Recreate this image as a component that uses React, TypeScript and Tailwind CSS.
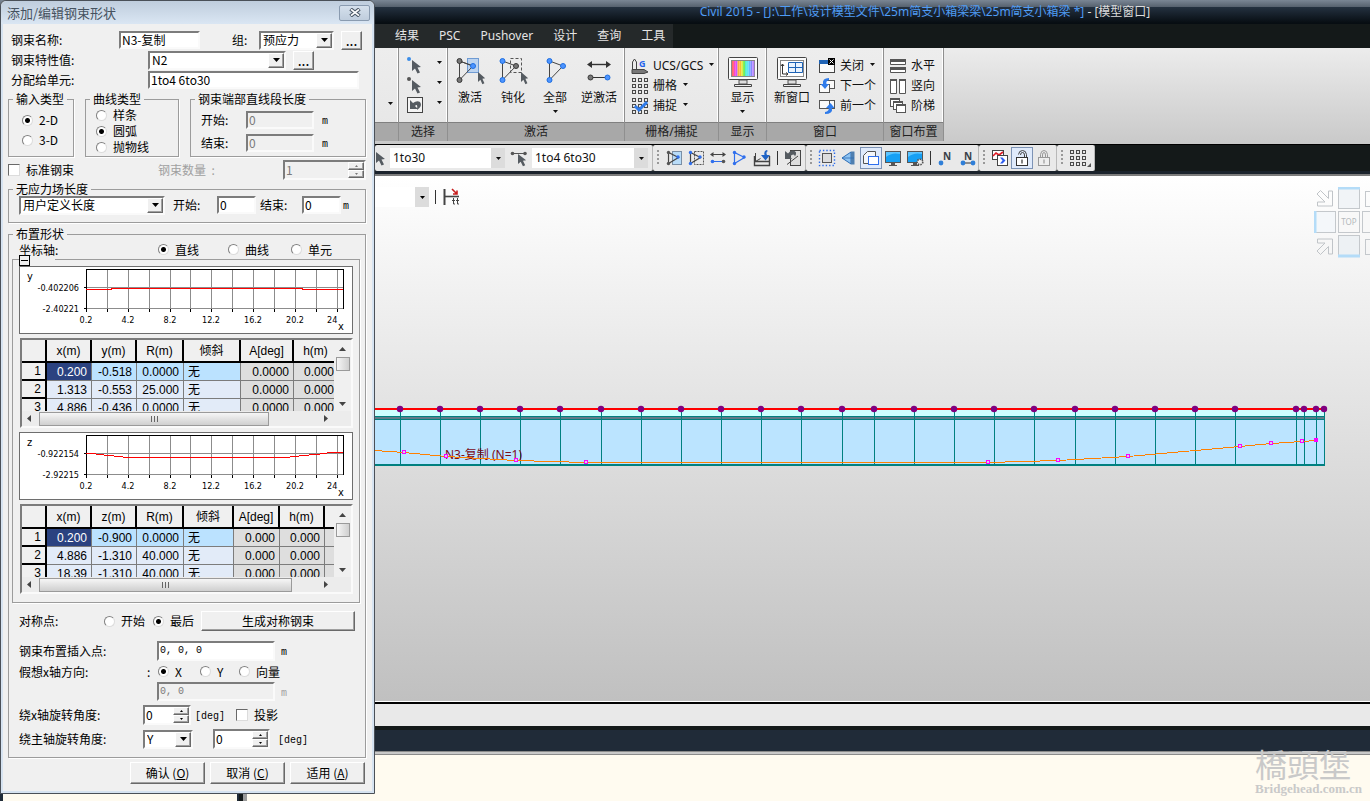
import type { ReactNode } from 'react';

const SUNKEN = 'border-2 border-t-[#7c7c7c] border-l-[#7c7c7c] border-r-[#fafafa] border-b-[#fafafa]';
const RAISED =
  'border border-t-white border-l-white border-r-[#696969] border-b-[#696969] bg-[#f0f0f0] shadow-[inset_-1px_-1px_0_#a0a0a0]';
const GROUP = 'min-w-0 border border-[#9c9c9c] shadow-[1px_1px_0_#fff]';

/* ---------- dialog controls ---------- */

const Caret = ({ className = '' }: { className?: string }) => (
  <svg className={className} width="7" height="4" viewBox="0 0 7 4" aria-hidden="true">
    <path d="M0 0h7L3.5 4z" fill="currentColor" />
  </svg>
);

interface TextBoxProps {
  label: string;
  value: string;
  className: string;
  id?: string;
  disabled?: boolean;
}

const TextBox = ({ label, value, className, id, disabled }: TextBoxProps) => (
  <input
    id={id}
    aria-label={label}
    defaultValue={value}
    disabled={disabled}
    className={`${SUNKEN} ${className} shrink-0 px-px pb-px leading-3 ${disabled ? 'bg-[#f0f0f0] text-[#7a7a7a]' : 'bg-white'}`}
  />
);

const DropDown = ({ label, value, className, id }: TextBoxProps) => (
  <span className={`relative h-[19px] shrink-0 ${className}`}>
    <select
      id={id}
      aria-label={label}
      className={`${SUNKEN} block h-full w-full appearance-none bg-white pl-0.5 leading-3`}
    >
      <option>{value}</option>
    </select>
    <span
      className={`${RAISED} pointer-events-none absolute top-0.5 right-0.5 bottom-0.5 flex w-4 items-center justify-center`}
    >
      <Caret />
    </span>
  </span>
);

const Spinner = ({ label, value, className, id, disabled }: TextBoxProps) => (
  <span className={`${SUNKEN} ${className} flex h-5 shrink-0 ${disabled ? 'bg-[#f0f0f0] text-[#7a7a7a]' : 'bg-white'}`}>
    <input
      id={id}
      aria-label={label}
      defaultValue={value}
      disabled={disabled}
      className="w-0 min-w-0 flex-1 px-px pb-0.5 leading-3"
    />
    <span className="flex w-4 flex-col">
      <button className={`${RAISED} flex flex-1 items-center justify-center`} aria-label="增加">
        <svg width="3" height="2" viewBox="0 0 3 2">
          <path d="M0 2h3L1.5 0z" fill="currentColor" />
        </svg>
      </button>
      <button className={`${RAISED} flex flex-1 items-center justify-center`} aria-label="减少">
        <svg width="3" height="2" viewBox="0 0 3 2">
          <path d="M0 0h3L1.5 2z" fill="currentColor" />
        </svg>
      </button>
    </span>
  </span>
);

const Radio = ({
  name,
  children,
  checked,
  className = '',
}: {
  name: string;
  children: ReactNode;
  checked?: boolean;
  className?: string;
}) => (
  <label className={`flex shrink-0 items-center gap-1.5 ${className}`}>
    <input
      type="radio"
      name={name}
      defaultChecked={checked}
      className="size-[11px] shrink-0 appearance-none rounded-full border border-t-[#808080] border-r-[#dcdcdc] border-b-[#dcdcdc] border-l-[#808080] bg-white checked:bg-[radial-gradient(circle,#000_2px,#fff_3px)]"
    />
    {children}
  </label>
);

const CheckBox = ({ children }: { children: ReactNode }) => (
  <label className="flex shrink-0 items-center gap-1.5">
    <input
      type="checkbox"
      className="size-3 shrink-0 appearance-none border border-t-[#696969] border-r-[#dcdcdc] border-b-[#dcdcdc] border-l-[#696969] bg-white checked:bg-black"
    />
    {children}
  </label>
);

const Legend = ({ children }: { children: ReactNode }) => (
  <legend className="ml-1 px-[3px] leading-3">{children}</legend>
);

const Unit = ({ className, children }: { className: string; children: ReactNode }) => (
  <span className={`pt-1 font-['Liberation_Mono',monospace] text-[10px] ${className}`}>{children}</span>
);

/* ---------- profile charts ---------- */

const GRID_X = [88, 109, 130, 151, 171, 192, 213, 234, 255, 276, 297, 318];
const TICK_LABELS = [
  [67, '0.2'],
  [109, '4.2'],
  [151, '8.2'],
  [192, '12.2'],
  [234, '16.2'],
  [276, '20.2'],
] as const;

const ProfileChart = ({ axis, upper, lower, line }: { axis: string; upper: string; lower: string; line: string }) => (
  <div className="h-[68px] border border-[#6e6e6e] bg-white">
    <svg
      width="332"
      height="66"
      viewBox="1 1 332 66"
      className="block font-['DejaVu_Sans_Condensed','Noto_Sans',sans-serif] text-[9px]"
    >
      <g stroke="#8c8c8c" shapeRendering="crispEdges">
        {GRID_X.map((x) => (
          <path key={x} d={`M${x + 0.5} 3v40`} />
        ))}
        <path d="M67 21.5h257M67 42.5h257" />
      </g>
      <path d="M67.500 43V3.500H324.500V43" fill="none" stroke="#000" shapeRendering="crispEdges" />
      <path
        d={`M65 21.500h3M65 42.500h3${[67, ...GRID_X].map((x) => `M${x + 0.5} 43v3`).join('')}`}
        stroke="#000"
        shapeRendering="crispEdges"
      />
      <path d={line} fill="none" stroke="#f00" shapeRendering="crispEdges" />
      <text x="8" y="14" fontSize="11">{axis}</text>
      <text x="60" y="25" textAnchor="end">{upper}</text>
      <text x="60" y="46" textAnchor="end">{lower}</text>
      {TICK_LABELS.map(([x, t]) => (
        <text key={t} x={x} y="57" textAnchor="middle">{t}</text>
      ))}
      <text x="308" y="57">24</text>
      <text x="319" y="64" fontSize="11">x</text>
    </svg>
  </div>
);

/* ---------- coordinate tables ---------- */

const ScrollArrow = ({ d }: { d: string }) => (
  <svg width="7" height="7" viewBox="0 0 7 7" aria-hidden="true">
    <path d={d} fill="#444" />
  </svg>
);

interface CoordTableProps {
  head: string[];
  widths: number[];
  rows: string[][];
  thumb: string;
}

const CoordTable = ({ head, widths, rows, thumb }: CoordTableProps) => (
  <div className={`${SUNKEN} ml-px h-[90px] min-w-0 bg-[#f0f0f0] font-['Liberation_Sans','Noto_Sans_CJK_SC',sans-serif]`}>
    <div className="flex h-[71px]">
      <div className="min-w-0 flex-1 overflow-hidden">
        <table className="w-max table-fixed border-separate border-spacing-0 text-right">
          <colgroup>
            {widths.map((w, i) => (
              <col key={i} style={{ width: w }} />
            ))}
          </colgroup>
          <thead>
            <tr>
              {head.map((h, i) => (
                <th key={i} className="h-[23px] border-r-2 border-b-2 border-black p-0 text-center font-normal">
                  {h}
                </th>
              ))}
            </tr>
          </thead>
          <tbody>
            {rows.map((row, r) => (
              <tr key={row[0]}>
                {row.map((cell, c) => {
                  let tone = 'border-r border-b border-[#7c7c7c] ';
                  if (c === 0) tone = 'border-r-2 border-b-2 border-black bg-[#f0f0f0]';
                  else if (c > 4) tone += 'bg-[#dedede]';
                  else if (r > 0) tone += 'bg-[#e2ebf8]';
                  else if (c === 1) tone += 'bg-[#2b4280] text-white';
                  else tone += 'bg-[#bbe2ff]';
                  return (
                    <td key={c} className={`h-[18px] overflow-hidden p-0 px-1 leading-4 ${c === 4 ? 'text-left' : ''} ${tone}`}>
                      {cell}
                    </td>
                  );
                })}
              </tr>
            ))}
          </tbody>
        </table>
      </div>
      <div className="flex w-[17px] flex-col items-center bg-[#f0f0f0] pt-1.5 pb-1">
        <ScrollArrow d="M0 5h7L3.500 1z" />
        <div className="mt-1 h-3.5 w-3.5 border border-[#9a9a9a] bg-linear-to-r from-[#f6f6f6] to-[#cfcfcf]" />
        <div className="flex-1" />
        <ScrollArrow d="M0 2h7L3.500 6z" />
      </div>
    </div>
    <div className="flex h-[15px] items-center bg-[#ececec] pr-[22px] pl-1">
      <ScrollArrow d="M5 0v7L1 3.500z" />
      <div
        className={`ml-1.5 flex h-3.5 items-center justify-center gap-px border border-[#9a9a9a] bg-linear-to-b from-[#f6f6f6] to-[#cfcfcf] ${thumb}`}
      >
        <i className="h-1.5 w-px bg-[#666]" />
        <i className="mx-px h-1.5 w-px bg-[#666]" />
        <i className="h-1.5 w-px bg-[#666]" />
      </div>
      <div className="flex-1" />
      <ScrollArrow d="M2 0v7L6 3.500z" />
    </div>
  </div>
);

const TABLE_Y: CoordTableProps = {
  head: ['', 'x(m)', 'y(m)', 'R(m)', '倾斜', 'A[deg]', 'h(m)'],
  widths: [25, 45, 45, 47, 57, 53, 45],
  rows: [
    ['1', '0.200', '-0.518', '0.0000', '无', '0.0000', '0.000'],
    ['2', '1.313', '-0.553', '25.000', '无', '0.0000', '0.000'],
    ['3', '4.886', '-0.436', '0.0000', '无', '0.0000', '0.000'],
  ],
  thumb: 'w-[230px]',
};

const TABLE_Z: CoordTableProps = {
  head: ['', 'x(m)', 'z(m)', 'R(m)', '倾斜', 'A[deg]', 'h(m)', ''],
  widths: [25, 45, 45, 47, 50, 46, 45, 45],
  rows: [
    ['1', '0.200', '-0.900', '0.0000', '无', '0.000', '0.000', ''],
    ['2', '4.886', '-1.310', '40.000', '无', '0.000', '0.000', ''],
    ['3', '18.39', '-1.310', '40.000', '无', '0.000', '0.000', ''],
  ],
  thumb: 'w-[253px]',
};

const TendonDialog = () => (
  <section
    role="dialog"
    aria-label="添加/编辑钢束形状"
    className="absolute top-0 left-0 z-10 w-[375px] rounded-t-md border border-[#4a5058] bg-[#f0f0f0] font-['Noto_Sans_CJK_SC',sans-serif] text-[12px] leading-4 text-black shadow-[inset_0_0_0_2px_#d6e3f1]"
  >
    <header className="flex h-[23px] items-center justify-between rounded-t-md bg-linear-to-b from-[#bfcddd] to-[#dae6f3] pr-1 pl-1.5">
      <h1 className="text-[13px] text-[#46525f]">添加/编辑钢束形状</h1>
      <button
        aria-label="关闭"
        className="flex h-4 w-[31px] items-center justify-center rounded-xs border border-[#8a9bb0] bg-linear-to-b from-[#d5e0ec] to-[#bfcddd]"
      >
        <svg width="12" height="9" viewBox="0 0 12 9">
          <path d="M1.500 1l9 7M10.500 1l-9 7" stroke="#4c5866" strokeWidth="3.800" />
          <path d="M2 1.400l8 6.200M10 1.400l-8 6.200" stroke="#fff" strokeWidth="1.800" />
        </svg>
      </button>
    </header>

    <div className="pt-1.5 pr-2 pb-[9px] pl-[7px]">
      <div className="flex h-5 items-center">
        <label htmlFor="name" className="w-[111px] pl-[3px]">钢束名称:</label>
        <TextBox id="name" label="钢束名称" value="N3-复制" className="h-[18px] w-[81px]" />
        <label htmlFor="group" className="w-[59px] pl-8">组:</label>
        <DropDown id="group" label="组" value="预应力" className="w-[75px]" />
        <button className={`${RAISED} ml-[7px] h-[19px] w-[21px] text-[14px] leading-3`}>...</button>
      </div>
      <div className="flex h-5 items-center">
        <label htmlFor="prop" className="w-[140px] pl-[3px]">钢束特性值:</label>
        <DropDown id="prop" label="钢束特性值" value="N2" className="w-[138px]" />
        <button className={`${RAISED} ml-[7px] h-[19px] w-[21px] text-[14px] leading-3`}>...</button>
      </div>
      <div className="flex h-5 items-center">
        <label htmlFor="elems" className="w-[140px] pl-[3px]">分配给单元:</label>
        <TextBox id="elems" label="分配给单元" value="1to4 6to30" className="h-[18px] w-[211px]" />
      </div>

      <div className="mt-[3px] flex h-[64px] justify-between">
        <fieldset className={`${GROUP} w-[66px]`}>
          <Legend>输入类型</Legend>
          <div className="pt-[5px] pl-[13px]">
            <Radio name="dim" checked className="h-5">2-D</Radio>
            <Radio name="dim" className="h-5">3-D</Radio>
          </div>
        </fieldset>
        <fieldset className={`${GROUP} w-[94px]`}>
          <Legend>曲线类型</Legend>
          <div className="pt-0.5 pl-2.5">
            <Radio name="curve" className="h-4">样条</Radio>
            <Radio name="curve" checked className="h-4">圆弧</Radio>
            <Radio name="curve" className="h-4">抛物线</Radio>
          </div>
        </fieldset>
        <fieldset className={`${GROUP} w-[176px]`}>
          <Legend>钢束端部直线段长度</Legend>
          <div className="pt-[3px] pl-2.5">
            <div className="flex h-[23px] items-center">
              <label htmlFor="s0" className="w-[45px]">开始:</label>
              <TextBox id="s0" label="开始" value="0" disabled className="h-[18px] w-[68px]" />
              <Unit className="pl-2">m</Unit>
            </div>
            <div className="flex h-[23px] items-center">
              <label htmlFor="s1" className="w-[45px]">结束:</label>
              <TextBox id="s1" label="结束" value="0" disabled className="h-[18px] w-[68px]" />
              <Unit className="pl-2">m</Unit>
            </div>
          </div>
        </fieldset>
      </div>

      <div className="mt-1 flex h-[18px] items-center">
        <div className="w-[150px]">
          <CheckBox>标准钢束</CheckBox>
        </div>
        <label htmlFor="count" className="w-[125px] text-[#a0a0a0]">钢束数量 &nbsp;:</label>
        <Spinner id="count" label="钢束数量" value="1" disabled className="w-[83px]" />
      </div>

      <fieldset className={`${GROUP} mt-1 h-10`}>
        <Legend>无应力场长度</Legend>
        <div className="flex h-5 items-center pl-2.5">
          <DropDown label="无应力场长度" value="用户定义长度" className="w-[146px]" />
          <label htmlFor="u0" className="w-[52px] pl-2">开始:</label>
          <TextBox id="u0" label="开始" value="0" className="h-[18px] w-[39px]" />
          <label htmlFor="u1" className="w-[46px] pl-1">结束:</label>
          <TextBox id="u1" label="结束" value="0" className="h-[18px] w-[39px]" />
          <Unit className="pl-0.5">m</Unit>
        </div>
      </fieldset>

      <fieldset className={`${GROUP} mt-[5px] pb-2`}>
        <Legend>布置形状</Legend>
        <div className="flex h-[19px] items-center pl-2.5">
          <span className="w-[139px]">坐标轴:</span>
          <Radio name="axis" checked className="w-[70px]">直线</Radio>
          <Radio name="axis" className="w-[63px]">曲线</Radio>
          <Radio name="axis">单元</Radio>
        </div>
        <div className={`${GROUP} relative mr-[5px] ml-[3px] flex flex-col gap-1 px-1.5 pt-1.5 pb-2`}>
          <span className="absolute -top-1.5 left-1.5 flex h-3 w-9 items-end bg-linear-to-b from-transparent from-40% to-[#f0f0f0] to-40%">
            <button
              aria-label="折叠"
              className="flex size-[11px] items-center justify-center border border-black bg-[#f0f0f0]"
            >
              <i className="h-px w-[7px] bg-black" />
            </button>
          </span>
          <ProfileChart
            axis="y"
            upper="-0.402206"
            lower="-2.40221"
            line="M67 23.500H92V22.500H283V23.500H324"
          />
          <CoordTable {...TABLE_Y} />
          <ProfileChart
            axis="z"
            upper="-0.922154"
            lower="-2.92215"
            line="M67 21.500h6l12 1.500 24 2.500H266l19-2 16-1.500 10-1.500h13"
          />
          <CoordTable {...TABLE_Z} />
        </div>

        <div className="mt-2 flex h-5 items-center pl-2.5">
          <span className="w-[85px]">对称点:</span>
          <Radio name="sym" className="w-[49px]">开始</Radio>
          <Radio name="sym" checked className="w-[48px]">最后</Radio>
          <button className={`${RAISED} h-5 w-[154px]`}>生成对称钢束</button>
        </div>
        <div className="mt-2.5 flex h-5 items-center pl-2.5">
          <label htmlFor="ins" className="w-[138px]">钢束布置插入点:</label>
          <TextBox
            id="ins"
            label="钢束布置插入点"
            value="0, 0, 0"
            className="h-5 w-[118px] font-['Liberation_Mono',monospace] text-[10px]"
          />
          <Unit className="pl-1.5">m</Unit>
        </div>
        <div className="flex h-[21px] items-center pl-2.5">
          <span className="w-[128px]">假想x轴方向:</span>
          <span className="w-[11px]">:</span>
          <Radio name="dir" checked className="w-[42px]">X</Radio>
          <Radio name="dir" className="w-[39px]">Y</Radio>
          <Radio name="dir">向量</Radio>
        </div>
        <div className="flex h-[19px] items-center pl-[148px]">
          <TextBox
            label="向量"
            value="0, 0"
            disabled
            className="h-[19px] w-[118px] font-['Liberation_Mono',monospace] text-[10px]"
          />
          <Unit className="pl-1.5 text-[#a0a0a0]">m</Unit>
        </div>
        <div className="mt-1 flex h-5 items-center pl-2.5">
          <label htmlFor="rx" className="w-[124px]">绕x轴旋转角度:</label>
          <Spinner id="rx" label="绕x轴旋转角度" value="0" className="w-[48px]" />
          <Unit className="w-[45px] pl-1">[deg]</Unit>
          <CheckBox>投影</CheckBox>
        </div>
        <div className="mt-1 flex h-5 items-center pl-2.5">
          <label htmlFor="rm" className="w-[124px]">绕主轴旋转角度:</label>
          <DropDown id="rm" label="主轴" value="Y" className="w-[50px]" />
          <span className="w-5" />
          <Spinner label="绕主轴旋转角度" value="0" className="w-[57px]" />
          <Unit className="pl-2">[deg]</Unit>
        </div>
      </fieldset>

      <div className="mt-1 flex justify-end gap-[5px] pr-px">
        <button className={`${RAISED} h-[22px] w-[75px]`}>确认 (<u>O</u>)</button>
        <button className={`${RAISED} h-[22px] w-[75px]`}>取消 (<u>C</u>)</button>
        <button className={`${RAISED} h-[22px] w-[75px]`}>适用 (<u>A</u>)</button>
      </div>
    </div>
  </section>
);

/* ---------- ribbon icons ---------- */

const POINTER = 'M0 0L9 7 5.500 7.500 8 12.500 5.500 13.500 3 8.500 0 11z';
const GREY = '#555b61';
const BLUE = '#4d94ff';

const Svg = ({ w, h, children }: { w: number; h: number; children: ReactNode }) => (
  <svg width={w} height={h} viewBox={`0 0 ${w} ${h}`} fill="none" className="shrink-0 overflow-visible" aria-hidden="true">
    {children}
  </svg>
);

const Dot = ({ x, y, r = 2.5, c = BLUE }: { x: number; y: number; r?: number; c?: string }) => (
  <circle cx={x} cy={y} r={r} fill={c} stroke={c === BLUE ? '#1f6fe0' : '#3a3a3a'} strokeWidth="1" />
);

const PickIcon = ({ c }: { c: string }) => (
  <Svg w={18} h={18}>
    <circle cx="2" cy="2" r="2" fill={c} />
    <path d={POINTER} transform="translate(5 3)" fill={GREY} />
  </Svg>
);

const UndoIcon = () => (
  <Svg w={18} h={18}>
    <rect x=".5" y=".5" width="15" height="15" fill="#f4f4f4" stroke="#444" />
    <path d="M3 3v9h8L8 9q3-3 2 4 6-4 3-8-3-2-7 1z" fill={GREY} />
  </Svg>
);

const ActivateIcon = () => (
  <Svg w={30} h={30}>
    <rect x="12.500" y="2.500" width="11" height="14" fill="#bcd3ef" stroke="#6f9bd3" />
    <path d="M4.500 5v19L18 10zM4.500 5L18 10" stroke="#444" />
    <Dot x={4.500} y={5} c="#777" />
    <Dot x={4.500} y={24} c="#777" />
    <Dot x={18} y={10} />
    <path d={POINTER} transform="translate(23 16) scale(.8 .9)" fill={GREY} />
  </Svg>
);

const DeactivateIcon = () => (
  <Svg w={30} h={30}>
    <rect x="12.500" y="2.500" width="11" height="14" stroke="#555" strokeDasharray="3 2" />
    <path d="M4.500 5v19L18 10z" stroke="#444" />
    <Dot x={4.500} y={5} />
    <Dot x={4.500} y={24} />
    <Dot x={18} y={10} c="#777" />
    <path d={POINTER} transform="translate(23 16) scale(.8 .9)" fill={GREY} />
  </Svg>
);

const AllIcon = () => (
  <Svg w={18} h={30}>
    <path d="M3.500 5v19L17 10z" stroke="#444" />
    <Dot x={3.500} y={5} />
    <Dot x={3.500} y={24} />
    <Dot x={17} y={10} />
  </Svg>
);

const InverseIcon = () => (
  <Svg w={24} h={30}>
    <path d="M2 8.500h20" stroke="#333" strokeWidth="1.400" />
    <path d="M0 8.500l5-3.500v7zM24 8.500l-5-3.500v7z" fill="#333" />
    <path d="M4 21.500h16" stroke="#333" />
    <Dot x={3.500} y={21.500} c="#777" />
    <Dot x={20.500} y={21.500} />
  </Svg>
);

const UcsIcon = () => (
  <Svg w={18} h={17}>
    <path d="M1.500 15V4l2-3 2 3v8" stroke="#444" />
    <path d="M1 11.500h12l4 2.500-4 1.500H1z" fill="#777" stroke="#444" />
    <text x="8" y="9" fontSize="9" fontWeight="bold" fill="#2563eb">G</text>
  </Svg>
);

const CELLS = [0, 1, 2].flatMap((r) => [0, 1, 2].map((c) => [c * 6 + 1, r * 6 + 1] as const));

const GridIcon = ({ snap }: { snap?: boolean }) => (
  <Svg w={18} h={18}>
    {CELLS.map(([x, y]) => (
      <rect key={`${x}-${y}`} x={x + 0.5} y={y + 0.5} width="3" height="3" stroke="#4a4a4a" />
    ))}
    {snap && <path d="M4 9l4 4 8-8" stroke="#2f7bea" strokeWidth="3" />}
  </Svg>
);

const RAINBOW = ['#f66', '#f4c', '#c5f', '#f9b13a', '#fb3', '#de4', '#7e5', '#5ec', '#5ce8f4', '#6bf', '#88f', '#b8f'];

const MonitorIcon = ({ children }: { children: ReactNode }) => (
  <Svg w={30} h={32}>
    <rect x=".5" y="1.500" width="29" height="22" rx="1" fill="#fafafa" stroke="#444" />
    <rect x="3.500" y="4.500" width="23" height="16" fill="#fff" stroke="#888" />
    {children}
    <path d="M11 24h8v4h-8z" fill="#ddd" stroke="#555" />
    <path d="M6.500 28.500h17v2h-17z" fill="#eee" stroke="#444" />
  </Svg>
);

const WindowIcon = ({ kind }: { kind: 'close' | 'next' | 'prev' }) => (
  <Svg w={17} h={17}>
    {kind === 'close' ? (
      <>
        <rect x=".5" y="2.500" width="15" height="12" fill="#fafafa" stroke="#444" />
        <path d="M0 2h10v4H0z" fill="#1f63b5" />
        <path d="M9 0h7v7H9z" fill="#000" />
        <path d="M10.500 1.500l4 4M14.500 1.500l-4 4" stroke="#fff" />
      </>
    ) : (
      <>
        <rect x="5.500" y="2.500" width="10" height="8" fill="#fafafa" stroke="#555" />
        <rect x=".5" y={kind === 'next' ? 6.5 : 2.5} width="10" height="8" fill="#fafafa" stroke="#555" />
        {kind === 'next' ? (
          <path d="M10 0Q3 0 4 6H1.500l4.500 5 4-5H7.500q-1-3 2.500-4z" fill="#2f7bea" />
        ) : (
          <path d="M6 16q8 0 7-6h2.500L11.500 5 7 10h2.500q1 3-3.500 4z" fill="#2f7bea" />
        )}
      </>
    )}
  </Svg>
);

const ArrangeIcon = ({ kind }: { kind: 'rows' | 'cols' | 'cascade' }) => (
  <Svg w={17} h={17}>
    {kind === 'rows' && (
      <>
        <path d="M.5 1.500h15v5H.5zM.5 9.500h15v5H.5z" fill="#fff" stroke="#555" />
        <path d="M0 1h16v3H0zM0 9h16v3H0z" fill="#555" />
      </>
    )}
    {kind === 'cols' && (
      <>
        <path d="M.5 1.500h6v14h-6zM9.500 1.500h6v14h-6z" fill="#fff" stroke="#555" />
        <path d="M0 1h7v2H0zM9 1h7v2H9z" fill="#555" />
      </>
    )}
    {kind === 'cascade' &&
      [0, 3, 6].map((o) => (
        <g key={o}>
          <rect x={o + 0.5} y={o + 0.5} width="9" height="8" fill="#fff" stroke="#555" />
          <path d={`M${o} ${o + 1}h10`} stroke="#555" strokeWidth="2" />
        </g>
      ))}
  </Svg>
);

/* ---------- ribbon ---------- */

const RibbonGroup = ({ title, className, children }: { title: string; className: string; children?: ReactNode }) => (
  <div
    className={`flex h-[93px] shrink-0 flex-col border-r border-[#8f8f8f] bg-linear-to-b from-[#ededed] to-[#e6e6e6] shadow-[inset_-1px_0_0_#fff] ${className}`}
  >
    <div className="flex flex-1 pt-2">{children}</div>
    <div className="h-[19px] overflow-hidden border-t border-[#808080] bg-[#a8a8a8] text-center leading-[18px] whitespace-nowrap text-[#222]">
      {title}
    </div>
  </div>
);

const BigButton = ({ icon, label, menu, className }: { icon: ReactNode; label: string; menu?: boolean; className: string }) => (
  <button className={`flex shrink-0 flex-col items-center self-start whitespace-nowrap ${className}`}>
    <span className="flex h-[34px] items-start">{icon}</span>
    <span className="leading-4">{label}</span>
    {menu && <Caret className="mt-1 h-[3px] w-[5px]" />}
  </button>
);

const RowButton = ({ icon, label, menu }: { icon: ReactNode; label: string; menu?: boolean }) => (
  <button className="flex h-5 items-center gap-1 whitespace-nowrap">
    {icon}
    {label}
    {menu && <Caret className="mb-1 ml-0.5 h-[3px] w-[5px]" />}
  </button>
);

const Ribbon = () => (
  <div className="flex h-24 shrink-0 bg-linear-to-b from-[#ececec] to-[#c9c9c9] pl-[375px] text-[#111]">
    <RibbonGroup title="" className="w-6">
      <Caret className="mt-[46px] ml-[13px] h-[3px] w-[5px]" />
    </RibbonGroup>
    <RibbonGroup title="选择" className="w-[49px]">
      <div className="flex w-full flex-col pl-2">
        {[<PickIcon key="n" c="#3b8de8" />, <PickIcon key="e" c="#555" />, <UndoIcon key="u" />].map((icon, i) => (
          <button key={i} aria-label="选择" className="flex h-5 items-center gap-3">
            {icon}
            <Caret className="mb-2 h-[3px] w-[5px]" />
          </button>
        ))}
      </div>
    </RibbonGroup>
    <RibbonGroup title="激活" className="w-[177px]">
      <BigButton icon={<ActivateIcon />} label="激活" className="w-[44px]" />
      <BigButton icon={<DeactivateIcon />} label="钝化" className="w-[42px]" />
      <BigButton icon={<AllIcon />} label="全部" menu className="w-[42px]" />
      <BigButton icon={<InverseIcon />} label="逆激活" className="w-[46px]" />
    </RibbonGroup>
    <RibbonGroup title="栅格/捕捉" className="w-[94px]">
      <div className="flex flex-col pl-1.5">
        <RowButton icon={<UcsIcon />} label="UCS/GCS" menu />
        <RowButton icon={<GridIcon />} label="栅格" menu />
        <RowButton icon={<GridIcon snap />} label="捕捉" menu />
      </div>
    </RibbonGroup>
    <RibbonGroup title="显示" className="w-[48px]">
      <BigButton
        label="显示"
        menu
        className="w-full"
        icon={
          <MonitorIcon>
            {RAINBOW.map((c, i) => (
              <path key={c} d={`M${4 + i * 1.85} 5h1.900v15h-1.900z`} fill={c} />
            ))}
          </MonitorIcon>
        }
      />
    </RibbonGroup>
    <RibbonGroup title="窗口" className="w-[117px]">
      <BigButton
        label="新窗口"
        className="w-[50px]"
        icon={
          <MonitorIcon>
            <path d="M11.500 6.500h14v10h-14zM18.500 6.500v10M11.500 11.500h14" fill="#eaf3fd" stroke="#1f63b5" />
            <path d="M5.500 8v10H11M4 10l1.500-2L7 10M9 16.500l2 1.500-2 1.500" stroke="#333" />
          </MonitorIcon>
        }
      />
      <div className="flex flex-col pl-0.5">
        <RowButton icon={<WindowIcon kind="close" />} label="关闭" menu />
        <RowButton icon={<WindowIcon kind="next" />} label="下一个" />
        <RowButton icon={<WindowIcon kind="prev" />} label="前一个" />
      </div>
    </RibbonGroup>
    <RibbonGroup title="窗口布置" className="w-[60px]">
      <div className="flex flex-col pl-1.5">
        <RowButton icon={<ArrangeIcon kind="rows" />} label="水平" />
        <RowButton icon={<ArrangeIcon kind="cols" />} label="竖向" />
        <RowButton icon={<ArrangeIcon kind="cascade" />} label="阶梯" />
      </div>
    </RibbonGroup>
  </div>
);

/* ---------- tool strip ---------- */

const Tool = ({ label, active, children }: { label: string; active?: boolean; children: ReactNode }) => (
  <button
    aria-label={label}
    className={`flex h-[22px] w-[22px] shrink-0 items-center justify-center ${active ? 'border border-[#7d93b5] bg-[#dfeafb]' : ''}`}
  >
    <Svg w={18} h={18}>{children}</Svg>
  </button>
);

const Strip = ({ className, children }: { className: string; children: ReactNode }) => (
  <div className={`flex shrink-0 items-center rounded-xs border-r border-[#b8b8b8] bg-[#e9e9e9] ${className}`}>{children}</div>
);

const Grip = () => <i className="mr-1 ml-1 h-4 w-0.5 shrink-0 bg-[repeating-linear-gradient(#999_0_2px,transparent_2px_4px)]" />;
const Bar = () => <i className="mx-1 h-3.5 w-px shrink-0 bg-[#333]" />;

const Combo = ({ label, value, className }: { label: string; value: string; className: string }) => (
  <span className={`relative block h-5 shrink-0 ${className}`}>
    <select aria-label={label} className="block h-full w-full appearance-none bg-white pl-[3px] text-[#111]">
      <option>{value}</option>
    </select>
    <span className="pointer-events-none absolute top-0 right-0 flex h-full w-3.5 items-center justify-center bg-[#dcdcdc]">
      <Caret className="h-[3px] w-[5px]" />
    </span>
  </span>
);

const MiniTriangle = ({ dots, line }: { dots: string; line: string }) => (
  <>
    <path d="M3.500 3.500v11l10-6z" stroke={line} strokeWidth="1.200" />
    <circle cx="3.500" cy="3.500" r="1.700" fill={dots} />
    <circle cx="3.500" cy="14.500" r="1.700" fill={dots} />
    <circle cx="13" cy="8" r="1.700" fill="#2f6fed" />
  </>
);

const MiniMonitor = () => (
  <>
    <rect x="1.500" y="2.500" width="15" height="11" fill="#16a0f4" stroke="#555" />
    <path d="M2 8q6-5 14-3V3H2z" fill="#5cc4ff" />
    <path d="M7 14h4v2H7zM5 16h8v1H5z" fill="#555" />
  </>
);

const ToolStrip = () => (
  <div className="flex h-[27px] shrink-0 border-t border-black bg-[#141919] pl-[375px] text-[#111]">
    <Strip className="w-[278px]">
      <Svg w={15} h={18}>
        <path d={POINTER} transform="translate(1 3)" fill={GREY} />
      </Svg>
      <Combo label="节点" value="1to30" className="w-[115px]" />
      <span className="flex w-[27px] justify-center">
        <Svg w={18} h={18}>
          <path d="M2 4.500h14" stroke="#555" />
          <circle cx="2.500" cy="4.500" r="1.800" fill="#555" />
          <circle cx="15" cy="4.500" r="1.800" fill="#555" />
          <path d={POINTER} transform="translate(8 5) scale(.9)" fill={GREY} />
        </Svg>
      </span>
      <Combo label="单元" value="1to4 6to30" className="w-[116px]" />
    </Strip>
    <Strip className="w-[153px]">
      <Grip />
      <Tool label="激活">
        <rect x="7.500" y="2.500" width="9" height="13" fill="#b9dcf8" stroke="#7a8fa5" />
        <MiniTriangle dots="#555" line="#444" />
      </Tool>
      <Tool label="钝化">
        <rect x="7.500" y="2.500" width="9" height="13" stroke="#555" strokeDasharray="2 1" />
        <MiniTriangle dots="#2f6fed" line="#444" />
      </Tool>
      <Tool label="逆激活">
        <path d="M2 5.500h14" stroke="#444" />
        <path d="M1 5.500L4.500 3v5zM17 5.500L13.500 3v5z" fill="#444" />
        <path d="M3 12.500h12" stroke="#2f6fed" />
        <circle cx="3.500" cy="12.500" r="1.800" fill="#2f6fed" />
        <circle cx="14.500" cy="12.500" r="1.800" fill="#555" />
      </Tool>
      <Tool label="全部">
        <MiniTriangle dots="#2f6fed" line="#2f6fed" />
      </Tool>
      <Tool label="保存">
        <path d="M1.500 7v9.500h15V7M1.500 12.500h15" stroke="#444" strokeWidth="1.400" />
        <path d="M2.500 4v8.500l5-3" stroke="#444" />
        <path d="M13.500 1q-3 1-2 5h-3.500l4.500 5.500 4.500-5.500H14q-1.500-3 1-4z" fill="#1f63c5" />
      </Tool>
      <Bar />
      <Tool label="恢复">
        <rect x="6.500" y="1.500" width="10" height="15" fill="#ddd" stroke="#444" />
        <path d="M1 2v8h7L6 7.500q4-4 5 0 3-5-2-6-3 0-5 3z" fill={GREY} />
        <path d="M3 15.500L14 7" stroke="#444" />
      </Tool>
    </Strip>
    <Strip className="w-[173px]">
      <Grip />
      <Tool label="窗口缩放">
        <rect x="4.500" y="4.500" width="9" height="9" fill="#ddd" stroke="#555" />
        <rect x="1.500" y="1.500" width="15" height="15" stroke="#2f6fed" strokeWidth="1.400" strokeDasharray="1.400 2" />
      </Tool>
      <Tool label="透视">
        <path d="M2 9l9-6v12z" fill="#8fc4f2" stroke="#2c6db5" />
        <path d="M11 2.500h3.500v13H11z" fill="#4f7fb0" />
        <path d="M2 9h12" stroke="#2c6db5" strokeWidth=".8" />
      </Tool>
      <Tool label="消隐" active>
        <path d="M1.500 6.500l4-4h8v8l-4 4h-8z" fill="#f4f6fa" stroke="#555" />
        <rect x="6.500" y="7.500" width="10" height="8" fill="#fff" stroke="#2f6fed" />
      </Tool>
      <Tool label="显示">
        <MiniMonitor />
      </Tool>
      <Tool label="显示选项">
        <MiniMonitor />
        <circle cx="14" cy="13" r="2.800" fill="#eee" stroke="#555" strokeWidth="1.600" strokeDasharray="1.500 1" />
      </Tool>
      <Bar />
      <Tool label="节点号">
        <circle cx="4" cy="14" r="2.400" fill="#2f7fd8" />
        <text x="6" y="11" fontSize="10" fontWeight="bold" fill="#3a4048">N</text>
      </Tool>
      <Tool label="单元号">
        <path d="M4 14h11" stroke="#333" />
        <circle cx="4" cy="14" r="2.400" fill="#2f7fd8" />
        <circle cx="14" cy="14" r="2.400" fill="#2f7fd8" />
        <text x="5" y="11" fontSize="10" fontWeight="bold" fill="#3a4048">N</text>
      </Tool>
    </Strip>
    <Strip className="w-[78px]">
      <Grip />
      <Tool label="刷新">
        <rect x="1.500" y="1.500" width="11" height="9" fill="#fff" stroke="#444" />
        <path d="M2 7l3-3 3 2 4-3" stroke="#e01b24" strokeWidth="1.600" />
        <rect x="6.500" y="6.500" width="10" height="10" fill="#fff" stroke="#444" />
        <path d="M9 8.500h2.500l3 3-3 3H9l2.500-3z" fill="#2f5ff0" />
      </Tool>
      <Tool label="解锁" active>
        <path d="M5.500 5.500q.5-4 4-4t4 4v3M7.500 6q0-2.500 2-2.500t2 2.500v2.500" stroke="#444" />
        <rect x="3.500" y="8.500" width="11" height="8" fill="#fff" stroke="#333" />
        <path d="M9 10.500v4" stroke="#333" strokeWidth="1.200" />
      </Tool>
      <Tool label="锁定">
        <path d="M5.500 8.500v-3q.5-4 3.500-4t3.500 4v3M7.500 8V6q0-2.500 1.500-2.500t1.500 2.500v2" stroke="#999" />
        <rect x="3.500" y="8.500" width="11" height="8" fill="#eee" stroke="#999" />
        <path d="M9 10.500v4" stroke="#999" strokeWidth="1.200" />
      </Tool>
    </Strip>
    <Strip className="w-[38px]">
      <Grip />
      <button aria-label="栅格" className="flex items-end pl-0.5">
        <GridIcon />
        <svg width="4" height="4" viewBox="0 0 4 4" aria-hidden="true">
          <path d="M4 0v4H0z" fill="#555" />
        </svg>
      </button>
    </Strip>
  </div>
);

/* ---------- model view ---------- */

const NODES = [
  400, 440, 480, 520, 560, 601, 641, 681, 721, 761, 801, 842, 874, 914, 954, 994, 1034, 1075, 1115, 1155, 1195, 1235,
  1296, 1304, 1316, 1324,
];
const TENDON = [
  [404, 452],
  [446, 456],
  [516, 460],
  [586, 462],
  [988, 462],
  [1058, 460],
  [1128, 456],
  [1240, 446],
  [1271, 443],
  [1302, 441],
  [1316, 440],
];

const GirderModel = () => (
  <svg width="955" height="70" viewBox="375 400 955 70" className="block shrink-0" aria-label="梁模型">
    <g shapeRendering="crispEdges">
      <path d="M375 410h950v6H375z" fill="#ccffff" />
      <path d="M375 417h950v2H375z" fill="#607c88" />
      <path d="M375 420h950v44H375z" fill="#bbe4ff" />
      <path d="M375 416.500h950M375 419.500h950" stroke="#008080" />
      <path d={NODES.map((x) => `M${x + 0.5} 410v55`).join('')} stroke="#008080" />
      <path d="M375 465h950" stroke="#008080" strokeWidth="2" />
      <path d="M375 409h950" stroke="#f00" strokeWidth="2" />
    </g>
    {NODES.map((x) => (
      <circle key={x} cx={x} cy="409" r="3.200" fill="#800080" />
    ))}
    <text x="445" y="459" fill="#7a0a18" fontSize="12">N3-复制 (N=1)</text>
    <path
      d={`M375 450.500${TENDON.map(([x, y]) => `L${x} ${y + 0.5}`).join('')}`}
      fill="none"
      stroke="#ff8000"
      shapeRendering="crispEdges"
    />
    {TENDON.map(([x, y], i) => (
      <rect
        key={x}
        x={x - 1.5}
        y={y - 1.5}
        width="3"
        height="3"
        fill={i === TENDON.length - 1 ? '#f0f' : '#cfd8e8'}
        stroke="#f0f"
        shapeRendering="crispEdges"
      />
    ))}
  </svg>
);

const ViewCube = () => (
  <svg width="56" height="72" viewBox="0 0 56 72" fill="none" className="absolute top-[11px] right-0" aria-label="视图">
    <g stroke="#c4c8cc" shapeRendering="crispEdges">
      <rect x="24.500" y=".5" width="21" height="21" fill="#f1f4f7" />
      <rect x="24.500" y="24.500" width="21" height="21" fill="#f8f8f8" />
      <rect x="24.500" y="48.500" width="21" height="21" fill="#edf1f4" />
      <rect x=".5" y="24.500" width="21" height="21" fill="#f4f7fa" />
      <rect x="48.500" y="24.500" width="21" height="21" fill="#f8f8f8" />
      <path d="M56 4.500h-4.500v15H56M56 52.500h-4.500v15H56" />
    </g>
    <path d="M6.500 3.500l8 8v-7.500h4v15h-15v-4h7.500l-8-8z" stroke="#c0c4c8" />
    <path d="M6.500 67.500l8-8v7.500h4v-15h-15v4h7.500l-8 8z" stroke="#c0c4c8" />
    <path d="M24 1h22M24 69h22" stroke="#b4dcf8" strokeWidth="3" />
    <path d="M1 24v22" stroke="#b4dcf8" strokeWidth="3" />
    <text x="35" y="38" textAnchor="middle" fontSize="8" fill="#b4b8bc">TOP</text>
  </svg>
);

const ModelView = () => (
  <main className="relative flex min-h-0 flex-1 flex-col overflow-hidden border-b border-white bg-linear-to-b from-white to-[#c0c0c0] pl-[375px]">
    <div className="flex shrink-0 items-center gap-1.5 pt-[11px] pb-[193px]">
      <Combo label="荷载工况" value="" className="w-[54px]" />
      <i className="h-3.5 w-px bg-[#333]" />
      <button aria-label="标注" className="ml-px">
        <Svg w={18} h={18}>
          <path d="M1.500 1v16" stroke="#444" strokeWidth="2" />
          <path d="M2 8.500h14" stroke="#444" strokeWidth="1.600" />
          <path d="M9 1l5 5M14 2.500V6h-4" stroke="#c81e1e" strokeWidth="1.600" />
          <path d="M10.500 10v6h1.500M9 12.500h3M14.500 10v6H16M13 12.500h3" stroke="#444" />
        </Svg>
      </button>
    </div>
    <GirderModel />
    <ViewCube />
  </main>
);

const MENUS = ['结果', 'PSC', 'Pushover', '设计', '查询', '工具'];

export default function App() {
  return (
    <div className="relative flex h-screen min-h-[794px] flex-col overflow-hidden bg-[#141919] font-['Noto_Sans','Noto_Sans_CJK_SC',sans-serif] text-[12px] leading-4">
      <header className="flex h-6 shrink-0 items-center justify-center bg-[linear-gradient(#7a8694_0,#56616e_7px,#243140_7px,#070d12_23px)] pl-[480px] whitespace-pre text-[#4f9cf5]">
        Civil 2015 - [J:\工作\设计模型文件\25m简支小箱梁梁\25m简支小箱梁 *]<span className="text-[#dcdcdc]"> - [模型窗口]</span>
      </header>
      <nav className="flex h-6 shrink-0 pl-[375px]">
        <div className="flex items-center gap-5 bg-[#25292a] pr-2 pl-5 text-[#e4e4e4]">
          {MENUS.map((m) => (
            <a key={m} href="#" className="whitespace-nowrap">
              {m}
            </a>
          ))}
        </div>
      </nav>
      <Ribbon />
      <ToolStrip />
      <div className="h-[5px] shrink-0 border-b-2 border-[#7c7c7c] bg-[#1b232c]" />
      <ModelView />
      <div className="h-6 shrink-0 border-t-2 border-black bg-[#e9e9e9]" />
      <div className="h-[25px] shrink-0 border-t-4 border-[#141919] bg-[#202b38]" />
      <div className="h-1 shrink-0 border-y border-[#8a8a8a] bg-[#c8c8c8]" />
      <footer className="relative flex h-[46px] shrink-0 border-l-[3px] border-[#202b38] bg-[#fffbf0] pl-[234px]">
        <i className="w-1.5 border-l-2 border-[#202b38] bg-[#141919]" />
        <i className="w-1 bg-[#9a9a9a]" />
        <div className="absolute right-2 bottom-1 text-[#c9c9c9]">
          <p className="font-['Noto_Sans_CJK_TC',sans-serif] text-[32px] leading-9">橋頭堡</p>
          <p className="font-['Liberation_Serif',serif] text-[13px] leading-4 font-bold">Bridgehead.com.cn</p>
        </div>
      </footer>
      <TendonDialog />
    </div>
  );
}
